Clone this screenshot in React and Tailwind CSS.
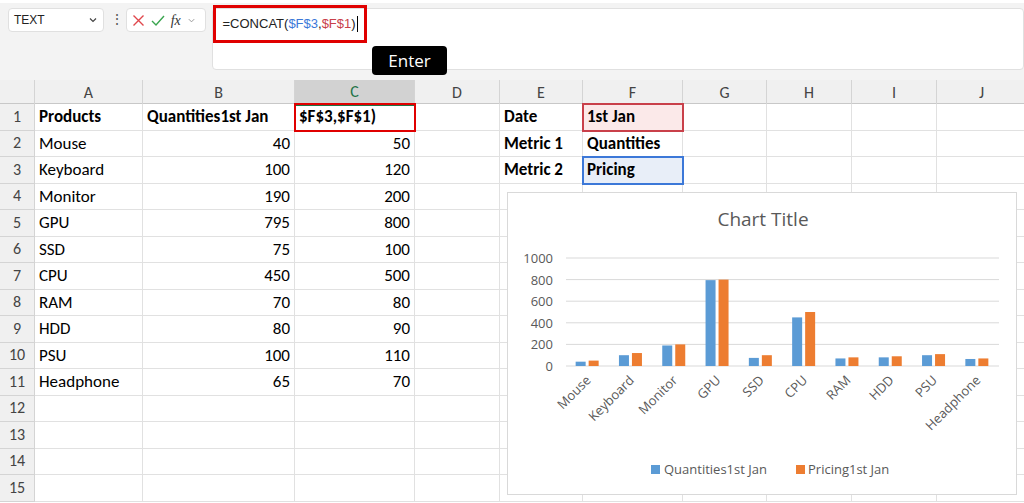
import React from "react";

const cols = [
  ["A", 108], ["B", 152], ["C", 120], ["D", 85], ["E", 83], ["F", 100], ["G", 84], ["H", 85], ["I", 85], ["J", 90],
];
const data = [
  ["Mouse", 40, 50], ["Keyboard", 100, 120], ["Monitor", 190, 200], ["GPU", 795, 800], ["SSD", 75, 100],
  ["CPU", 450, 500], ["RAM", 70, 80], ["HDD", 80, 90], ["PSU", 100, 110], ["Headphone", 65, 70],
];
const tmpl = "grid-cols-[35px_108px_152px_120px_85px_83px_100px_84px_85px_85px_90px]";
const font = { fontFamily: "Carlito, 'Liberation Sans', Arial, sans-serif" };

function Row({ n, cells }) {
  return (
    <div className={`grid ${tmpl} h-[26.5px]`}>
      <div className="bg-[#f0f0f0] border-r border-b border-[#d4d4d4] text-[#444] text-[16px] flex items-center justify-center">{n}</div>
      {cells.map((c, i) => (
        <div key={i} className={`border-r border-b border-[#e1e1e1] flex items-center px-1 text-[17px] text-black overflow-visible whitespace-nowrap ${c.right ? "justify-end" : ""} ${c.bold ? "font-bold" : ""} ${c.cls || ""}`}>{c.t}</div>
      ))}
    </div>
  );
}

function Chart() {
  const x0 = 58, x1 = 491, yTop = 65, yBot = 173;
  const cw = (x1 - x0) / 10;
  const sy = (v) => yBot - (v / 1000) * (yBot - yTop);
  return (
    <div className="absolute left-[507px] top-[192px] w-[510px] h-[303px] bg-white border border-[#d9d9d9]">
      <svg width="510" height="303" viewBox="0 0 510 303" style={{ fontFamily: "'Open Sans', sans-serif" }}>
        <text x="255" y="33" textAnchor="middle" fontSize="19" fill="#595959">Chart Title</text>
        {[0, 200, 400, 600, 800, 1000].map((v) => (
          <g key={v}>
            <line x1={x0} x2={x1} y1={sy(v)} y2={sy(v)} stroke="#d9d9d9" />
            <text x="45" y={sy(v) + 5} textAnchor="end" fontSize="13" fill="#595959">{v}</text>
          </g>
        ))}
        {data.map(([name, q, p], i) => {
          const cx = x0 + cw * i + cw / 2;
          return (
            <g key={name}>
              <rect x={cx - 12} y={sy(q)} width="10" height={yBot - sy(q)} fill="#5b9bd5" />
              <rect x={cx + 1} y={sy(p)} width="10" height={yBot - sy(p)} fill="#ed7d31" />
              <text x={cx + 4} y="188" textAnchor="end" fontSize="13" fill="#595959" transform={`rotate(-45 ${cx + 4} 188)`}>{name}</text>
            </g>
          );
        })}
        <rect x="143" y="272" width="9" height="9" fill="#5b9bd5" />
        <text x="156" y="281" fontSize="13" fill="#595959">Quantities1st Jan</text>
        <rect x="288" y="272" width="9" height="9" fill="#ed7d31" />
        <text x="300" y="281" fontSize="13" fill="#595959">Pricing1st Jan</text>
      </svg>
    </div>
  );
}

export default function App() {
  const rows = [];
  rows.push([{ t: "Products", bold: true }, { t: "Quantities1st Jan", bold: true }, { t: "$F$3,$F$1)", bold: true, cls: "outline outline-2 outline-[#e00000] -outline-offset-1 relative z-10" }, { t: "" }, { t: "Date", bold: true }, { t: "1st Jan", bold: true, cls: "bg-[#fbe9e9] outline outline-2 outline-[#c9404a] -outline-offset-1 relative z-10" }, { t: "" }, { t: "" }, { t: "" }, { t: "" }]);
  data.forEach(([n, q, p], i) => {
    const e = i === 0 ? { t: "Metric 1", bold: true } : i === 1 ? { t: "Metric 2", bold: true } : { t: "" };
    const f = i === 0 ? { t: "Quantities", bold: true } : i === 1 ? { t: "Pricing", bold: true, cls: "bg-[#e8eef8] outline outline-2 outline-[#3c78d8] -outline-offset-1 relative z-10" } : { t: "" };
    rows.push([{ t: n }, { t: q, right: true }, { t: p, right: true }, { t: "" }, e, f, { t: "" }, { t: "" }, { t: "" }, { t: "" }]);
  });
  for (let i = 0; i < 4; i++) rows.push(Array(10).fill({ t: "" }));

  return (
    <div className="relative w-[1024px] h-[503px] overflow-hidden bg-white" style={font}>
      <div className="h-[80px] bg-[#f3f3f3] relative">
        <div className="absolute left-0 right-0 top-0 h-[3px] bg-white" />
        <div className="flex items-start pt-[8px] pl-[8px] gap-[6px]">
          <div className="w-[96px] h-[24px] bg-white border border-[#e0e0e0] rounded flex items-center justify-between px-[5px] text-[12px] text-[#222]" style={{ fontFamily: "'Liberation Sans', sans-serif" }}>
            TEXT
            <svg width="10" height="10" viewBox="0 0 10 10"><path d="M2 3.5 L5 6.5 L8 3.5" fill="none" stroke="#444" strokeWidth="1.2" /></svg>
          </div>
          <div className="text-[#555] text-[14px] leading-[24px] w-[10px] text-center">⋮</div>
          <div className="w-[80px] h-[24px] bg-white border border-[#e0e0e0] rounded flex items-center gap-[6px] px-[5px]">
            <svg width="13" height="13" viewBox="0 0 13 13"><path d="M1.5 1.5 L11.5 11.5 M11.5 1.5 L1.5 11.5" stroke="#e0474c" strokeWidth="1.4" /></svg>
            <svg width="14" height="13" viewBox="0 0 14 13"><path d="M1 7 L5 11 L13 2" fill="none" stroke="#3aa54f" strokeWidth="1.4" /></svg>
            <span className="italic text-[14px] text-[#333]" style={{ fontFamily: "'Liberation Serif', serif" }}>fx</span>
            <svg width="9" height="9" viewBox="0 0 10 10"><path d="M2 3.5 L5 6.5 L8 3.5" fill="none" stroke="#999" strokeWidth="1.1" /></svg>
          </div>
          <div className="w-[815px] h-[62px] bg-white border border-[#e0e0e0] rounded relative">
            <div className="absolute left-0 top-[-4px] w-[154px] h-[38px] border-[3px] border-[#e00000] flex items-center pl-[7px] text-[13px]" style={{ fontFamily: "'Liberation Sans', sans-serif" }}>
              <span className="text-[#222]">=CONCAT(</span><span className="text-[#3c78d8]">$F$3</span><span className="text-[#222]">,</span><span className="text-[#c9404a]">$F$1</span><span className="text-[#222]">)</span><span className="inline-block w-px h-[16px] bg-black ml-[1px]" />
            </div>
          </div>
        </div>
        <div className="absolute left-[372px] top-[46px] w-[75px] h-[29px] bg-black rounded-[4px] text-white text-[17px] flex items-center justify-center" style={{ fontFamily: "'Open Sans', sans-serif" }}>Enter</div>
      </div>
      <div className={`grid ${tmpl} h-[24px] bg-[#f0f0f0] border-b border-[#c8c8c8]`}>
        <div className="border-r border-[#d4d4d4]" />
        {cols.map(([c]) => (
          <div key={c} className={`flex items-center justify-center text-[16px] border-r border-[#d4d4d4] ${c === "C" ? "bg-[#d2d2d2] text-[#217346] border-b-2 border-b-[#217346]" : "text-[#444]"}`}>{c}</div>
        ))}
      </div>
      {rows.map((r, i) => <Row key={i} n={i + 1} cells={r} />)}
      <Chart />
    </div>
  );
}
